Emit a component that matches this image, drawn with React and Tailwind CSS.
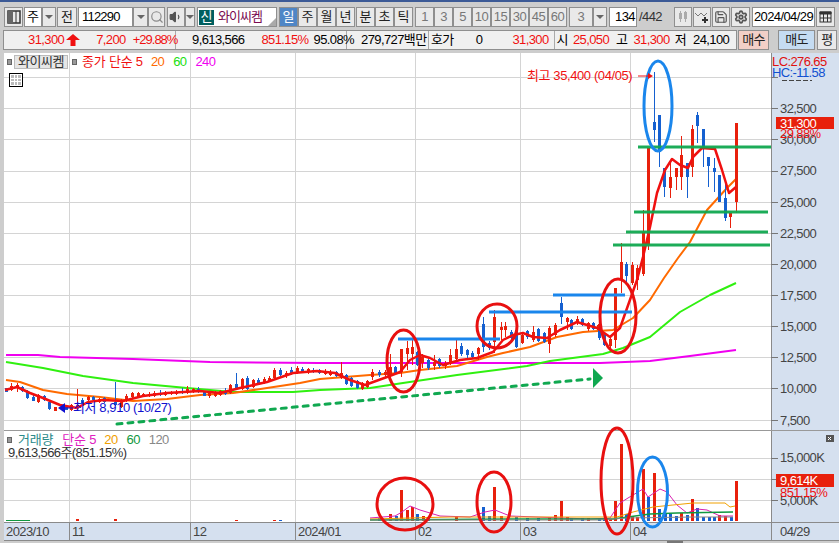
import React from 'react';
import { Search, Settings, Save, Volume1 } from 'lucide-react';

const R = '#e8200c';
const B = '#1560d0';

// x, bodyTop, bodyBottom, wickTop, wickBottom, up
const candles = [
  [6, 388, 392, 388, 392, 0], [11, 386, 390, 383, 391, 1], [17, 385, 388, 383, 392, 1], [22, 387, 391, 386, 392, 0],
  [27, 392, 398, 390, 399, 0], [33, 397, 401, 395, 401, 0], [38, 395, 402, 394, 403, 1], [44, 396, 400, 395, 401, 0],
  [49, 402, 409, 401, 410, 0], [55, 407, 411, 407, 411, 1], [66, 407, 410, 405, 410, 0], [71, 405, 410, 404, 411, 1],
  [77, 405, 408, 389, 410, 1], [82, 400, 404, 398, 405, 0], [88, 397, 400, 396, 404, 1], [93, 397, 400, 396, 401, 0],
  [99, 399, 402, 398, 403, 1], [104, 398, 402, 397, 403, 0], [115, 402, 405, 382, 406, 0], [121, 400, 407, 399, 408, 1],
  [126, 396, 400, 394, 402, 1], [132, 393, 397, 392, 399, 1], [138, 393, 397, 392, 398, 1], [143, 394, 396, 393, 397, 1],
  [149, 394, 396, 392, 397, 1], [154, 393, 396, 391, 397, 1], [160, 393, 395, 390, 396, 0], [165, 393, 395, 391, 396, 1],
  [171, 392, 394, 391, 395, 1], [176, 392, 394, 390, 395, 1], [182, 391, 393, 388, 394, 0], [187, 389, 393, 386, 394, 1],
  [193, 389, 392, 388, 393, 1], [198, 389, 392, 387, 393, 0], [204, 392, 396, 391, 396, 0], [209, 393, 396, 392, 398, 1],
  [215, 392, 396, 391, 397, 1], [220, 391, 395, 390, 396, 1], [225, 391, 394, 388, 395, 0], [230, 385, 393, 384, 394, 1],
  [236, 384, 388, 373, 390, 0], [242, 379, 389, 378, 390, 1], [247, 378, 389, 376, 390, 0], [253, 380, 387, 379, 388, 1],
  [258, 380, 384, 378, 385, 0], [264, 379, 383, 377, 384, 1], [269, 378, 381, 376, 382, 1], [274, 370, 378, 368, 380, 1],
  [280, 370, 375, 368, 376, 0], [286, 373, 376, 371, 378, 1], [291, 370, 374, 367, 375, 0], [297, 368, 372, 366, 374, 1],
  [302, 369, 372, 367, 373, 0], [308, 369, 372, 368, 374, 1], [313, 370, 372, 368, 373, 0], [319, 370, 373, 369, 374, 0],
  [325, 371, 374, 369, 375, 1], [330, 372, 375, 370, 376, 1], [336, 372, 376, 371, 377, 0], [341, 373, 378, 362, 379, 1],
  [346, 375, 384, 374, 385, 0], [351, 378, 386, 377, 387, 0], [357, 381, 388, 380, 389, 0], [362, 383, 389, 382, 390, 1],
  [367, 381, 387, 380, 388, 1], [372, 372, 377, 369, 380, 1], [379, 372, 375, 370, 377, 0], [385, 372, 375, 370, 378, 1],
  [390, 367, 375, 354, 383, 1], [395, 367, 374, 366, 375, 0], [401, 349, 372, 349, 377, 1], [407, 348, 354, 341, 370, 1],
  [412, 347, 354, 338, 365, 1], [417, 352, 365, 351, 366, 0], [422, 357, 363, 354, 368, 1], [428, 360, 368, 358, 370, 0],
  [434, 362, 366, 355, 370, 1], [439, 359, 366, 358, 368, 0], [445, 363, 366, 361, 369, 1], [450, 355, 363, 349, 365, 1],
  [456, 349, 359, 340, 361, 1], [461, 346, 354, 343, 356, 0], [467, 350, 355, 349, 358, 0], [472, 353, 357, 351, 358, 0],
  [478, 348, 354, 347, 360, 1], [483, 324, 347, 317, 352, 0], [489, 343, 348, 341, 350, 0], [494, 317, 342, 310, 353, 1],
  [501, 327, 330, 322, 340, 1], [505, 326, 330, 322, 337, 1], [511, 332, 338, 330, 339, 0], [516, 330, 347, 329, 348, 0],
  [522, 335, 343, 334, 344, 1], [527, 331, 337, 330, 339, 0], [533, 332, 340, 326, 342, 1], [538, 329, 341, 328, 342, 0],
  [544, 333, 342, 332, 343, 0], [549, 328, 344, 326, 353, 1], [555, 325, 335, 323, 337, 1], [561, 303, 317, 297, 324, 0],
  [567, 318, 322, 317, 330, 1], [571, 320, 329, 319, 330, 0], [577, 319, 323, 316, 325, 1], [582, 319, 325, 318, 326, 0],
  [588, 323, 329, 322, 331, 1], [593, 323, 329, 322, 330, 0], [598, 325, 330, 324, 331, 1], [599, 329, 338, 328, 340, 0],
  [604, 335, 345, 334, 346, 0], [610, 339, 346, 337, 350, 1], [615, 288, 340, 288, 348, 1], [621, 262, 280, 243, 293, 1],
  [626, 264, 276, 262, 284, 0], [632, 265, 283, 262, 285, 1], [637, 268, 280, 265, 290, 1], [643, 232, 274, 210, 276, 1],
  [648, 148, 245, 148, 250, 1], [654, 122, 130, 72, 142, 0], [659, 115, 152, 115, 167, 0], [664, 168, 187, 168, 197, 0],
  [670, 177, 188, 160, 198, 1], [676, 168, 177, 168, 190, 1], [681, 155, 177, 136, 190, 1], [687, 163, 177, 163, 198, 0],
  [692, 129, 167, 125, 177, 1], [697, 115, 126, 112, 143, 0], [703, 129, 148, 129, 167, 0], [708, 157, 166, 157, 187, 0],
  [714, 168, 172, 158, 192, 0], [719, 175, 202, 175, 202, 0], [725, 198, 218, 180, 221, 0], [730, 213, 217, 213, 228, 1],
  [736, 123, 202, 123, 213, 1],
];

const ma5 = '5,390 17,387 30,393 43,398 60,405 77,408 88,402 103,400 123,401 143,396 167,393 200,391 220,393 240,388 267,382 293,373 317,371 335,373 350,380 365,385 387,377 400,372 410,360 420,355 430,358 443,365 460,360 477,358 493,352 503,340 513,335 523,333 533,337 547,338 560,330 577,322 597,328 610,337 620,328 637,280 643,257 650,227 657,193 665,170 672,159 680,165 688,168 693,157 702,148 715,149 722,170 729,193 736,187';
const ma20 = '6,380 20,382 43,390 67,394 100,397 133,401 167,399 200,395 233,393 267,388 300,383 320,379 345,377 370,375 400,373 420,370 457,366 487,357 503,353 530,347 557,337 583,332 613,330 633,318 650,300 664,278 678,258 690,242 707,210 727,188 736,179';
const ma60 = '6,362 43,368 83,376 133,383 187,388 233,392 293,392 320,390 370,388 403,383 457,375 527,366 550,361 603,354 623,348 650,337 680,312 710,295 736,283';
const ma240 = '6,355 38,355 60,357 133,359 210,362 320,363 450,363 600,363 650,361 690,356 736,350';

// x, top, up
const volumes = [
  [77, 519, 1], [115, 519, 1], [236, 520, 1], [274, 520, 1], [280, 520, 0], [379, 518, 0], [390, 514, 1], [396, 516, 0], [401, 490, 1], [407, 510, 1],
  [412, 507, 1], [417, 514, 0], [423, 516, 1], [428, 517, 0], [456, 516, 1], [483, 507, 0], [489, 516, 0], [494, 487, 1], [501, 516, 1],
  [516, 517, 0], [527, 518, 0], [538, 518, 0], [549, 517, 1], [555, 515, 1], [561, 501, 1], [567, 517, 1], [571, 518, 0], [582, 518, 0], [588, 518, 1],
  [599, 519, 0], [604, 519, 0], [610, 519, 1], [615, 501, 1], [621, 444, 1], [626, 514, 0], [632, 516, 1], [637, 517, 1], [643, 469, 1],
  [648, 497, 0], [654, 473, 1], [659, 509, 0], [665, 514, 0], [670, 514, 0], [676, 516, 0], [681, 513, 1], [687, 515, 0], [692, 499, 1],
  [697, 508, 0], [703, 517, 0], [709, 517, 0], [714, 517, 0], [719, 515, 1], [725, 516, 1], [731, 517, 0], [736, 481, 1],
];

const Btn = ({ w, children, className = '' }) => (
  <div className={`h-5 shrink-0 flex items-center justify-center border border-[#8f8f8f] bg-[#e9e9e9] text-[13px] text-[#222] ${className}`} style={{ width: w }}>
    {children}
  </div>
);

const Input = ({ w, children, className = '' }) => (
  <div className={`h-5 shrink-0 flex items-center border border-[#8f8f8f] bg-white text-[13px] text-black ${className}`} style={{ width: w }}>
    {children}
  </div>
);

const Drop = ({ w = 14 }) => (
  <div className="h-5 shrink-0 flex items-center justify-center border border-[#8f8f8f] bg-[#e9e9e9]" style={{ width: w }}>
    <div className="w-0 h-0 border-x-[4px] border-x-transparent border-t-[4px] border-t-[#666]" />
  </div>
);

const Toolbar = () => (
  <div className="h-[27px] flex items-center pl-1 pt-[3px]">
    <Btn w={19} className="mr-[1px]">
      <svg width="14" height="14" viewBox="0 0 14 14">
        <rect x="1" y="1" width="12" height="12" fill="none" stroke="#333" strokeWidth="1.5" />
        <rect x="1" y="1" width="5" height="12" fill="#666" />
        <path d="M9 1v12" stroke="#333" />
      </svg>
    </Btn>
    <Input w={18} className="justify-center">주</Input>
    <Drop />
    <Btn w={20} className="mx-[1px]">전</Btn>
    <Input w={55} className="pl-[3px] tracking-[-0.8px]">112290</Input>
    <Drop w={15} />
    <Btn w={17}><Search size={14} strokeWidth={2} color="#8a8a8a" /></Btn>
    <Btn w={18} className="ml-[2px]"><Volume1 size={14} color="#555" fill="#555" /></Btn>
    <Drop w={10} />
    <Input w={80} className="ml-[2px] relative">
      <span className="w-[15px] h-[15px] ml-[1px] bg-[#005f5f] text-white flex items-center justify-center text-[13px]">신</span>
      <span className="ml-1 text-[#7a0a50] text-[13px] tracking-[-1px]">와이씨켐</span>
      <div className="absolute right-0 bottom-0 w-0 h-0 border-l-[8px] border-l-transparent border-b-[8px] border-b-[#aaa]" />
    </Input>
    <Btn w={19} className="ml-[2px] !bg-[#4f86c6] !text-white">일</Btn>
    <Btn w={19}>주</Btn>
    <Btn w={19}>월</Btn>
    <Btn w={19}>년</Btn>
    <Btn w={19} className="ml-[1px]">분</Btn>
    <Btn w={19}>초</Btn>
    <Btn w={19}>틱</Btn>
    {['1', '3', '5', '10', '15', '30', '45', '60'].map((t, i) => (
      <Btn key={t} w={19} className={`!text-[#777] tracking-[-0.6px] ${i === 0 ? 'ml-[2px]' : ''}`}>{t}</Btn>
    ))}
    <Btn w={24} className="ml-[2px] !text-[#777]">3</Btn>
    <Drop />
    <Input w={28} className="ml-[2px] justify-end pr-[1px] tracking-[-0.6px]">134</Input>
    <span className="w-[35px] ml-[2px] shrink-0 text-[13px] text-[#333] tracking-[-0.6px]">/442</span>
    <Btn w={18}>
      <svg width="14" height="14" viewBox="0 0 14 14">
        <path d="M3 3h3v6H3zM8 2h3v7H8z" fill="#aaa" />
        <path d="M4.500 1v11M9.500 1v11" stroke="#aaa" />
      </svg>
    </Btn>
    <Btn w={18} className="ml-[1px]">
      <svg width="16" height="14" viewBox="0 0 16 14" fill="none">
        <path d="M1 3l3 3 3-3 3 3 3-3" stroke="#777" />
        <path d="M11 7v6M8 10h6" stroke="#333" strokeWidth="2" />
      </svg>
    </Btn>
    <Btn w={18} className="ml-[1px]"><Save size={14} color="#555" /></Btn>
    <Btn w={19} className="ml-[1px]"><Settings size={14} color="#555" strokeWidth={3} /></Btn>
    <Input w={63} className="ml-[2px] justify-center tracking-[-0.6px]">2024/04/29</Input>
    <Btn w={19} className="ml-[1px]">
      <svg width="13" height="12" viewBox="0 0 13 12" fill="none" stroke="#333">
        <rect x="1" y="1" width="11" height="10" />
        <path d="M1 1h11v2H1z" fill="#333" />
        <path d="M1 7h11M4.500 3v8M8.500 3v8" />
      </svg>
    </Btn>
  </div>
);

const Quote = () => (
  <div className="h-[24px] flex items-start pl-[3px] pt-[1px] text-[13px] leading-[18px] whitespace-nowrap tracking-[-0.6px]">
    <div className="h-5 w-[734px] shrink-0 flex border border-[#8f8f8f] bg-[#f0f0f0]">
      <div className="w-[172px] shrink-0 flex items-center border-r border-[#aaa] text-[#f01010]">
        <span className="ml-[24px] shrink-0">31,300</span>
        <svg width="14" height="12" viewBox="0 0 14 12" className="ml-[2px] shrink-0"><path d="M7 0l7 6H9.500v6h-5V6H0z" fill="#f01010" /></svg>
        <span className="ml-[16px] shrink-0">7,200</span>
        <span className="ml-[7px] shrink-0 tracking-[-1px]">+29.88%</span>
      </div>
      <div className="w-[171px] shrink-0 flex items-center border-r border-[#aaa]">
        <span className="ml-[16px] text-black">9,613,566</span>
        <span className="ml-[17px] text-[#f01010]">851.15%</span>
        <span className="ml-[5px] text-black">95.08%</span>
      </div>
      <div className="w-[82px] shrink-0 flex items-center border-r border-[#aaa] text-black overflow-hidden">
        <span className="ml-[14px]">279,727백만</span>
      </div>
      <div className="flex-1 flex items-center text-black">
        <span className="ml-[2px]">호가</span>
        <span className="ml-[22px]">0</span>
        <span className="ml-[30px] text-[#f01010]">31,300</span>
        <span className="ml-[5px] pl-[2px] border-l border-[#aaa]">시</span>
        <span className="ml-[5px] text-[#f01010]">25,050</span>
        <span className="ml-[7px]">고</span>
        <span className="ml-[6px] text-[#f01010]">31,300</span>
        <span className="ml-[5px]">저</span>
        <span className="ml-[7px]">24,100</span>
      </div>
    </div>
    <Btn w={31} className="ml-[1px] !bg-[#f2cfc7]">매수</Btn>
    <Btn w={37} className="ml-[9px] !bg-[#c5dcf2]">매도</Btn>
    <Btn w={20} className="ml-[2px]">평</Btn>
  </div>
);

const Grid = ({ ys, top, bottom }) => (
  <g stroke="#d4d4d4">
    {ys.map((y) => <line key={y} x1="4" x2="771" y1={y + 0.5} y2={y + 0.5} />)}
    {[69, 190, 295, 415, 520, 630].map((x) => <line key={x} x1={x + 0.5} x2={x + 0.5} y1={top} y2={bottom} />)}
  </g>
);

const MainChart = () => (
  <svg width="767" height="378" viewBox="4 53 767 378" className="block shrink-0 bg-white overflow-visible">
    <Grid ys={[77, 108, 139, 171, 202, 233, 264, 295, 326, 357, 388, 420]} top={53} bottom={430} />
    <line x1="4" x2="771" y1="430.500" y2="430.500" stroke="#999" />
    <g fill="none" strokeLinejoin="round" strokeWidth="2">
      <polyline points={ma240} stroke="#f000f0" />
      <polyline points={ma60} stroke="#30f010" />
      <polyline points={ma20} stroke="#ff6a00" />
    </g>
    {candles.map(([x, t, b, wt, wb, up]) => (
      <g key={x} fill={up ? R : B} stroke="none">
        <rect x={x} y={wt} width="1" height={wb - wt} />
        <rect x={x - 1} y={t} width="3" height={Math.max(b - t, 1)} />
      </g>
    ))}
    <polyline points={ma5} fill="none" stroke="#f01010" strokeWidth="2.500" strokeLinejoin="round" />
    <g stroke="#10a850" strokeWidth="3" opacity="0.95">
      <line x1="638" x2="771" y1="147" y2="147" />
      <line x1="634" x2="768" y1="212" y2="212" />
      <line x1="626" x2="768" y1="232" y2="232" />
      <line x1="613" x2="770" y1="245" y2="245" />
    </g>
    <g stroke="#1a86ec" strokeWidth="3">
      <line x1="553" x2="625" y1="295" y2="295" />
      <line x1="489" x2="632" y1="312" y2="312" />
      <line x1="398" x2="500" y1="339" y2="339" />
    </g>
    <line x1="117" y1="424" x2="590" y2="379" stroke="#10a850" strokeWidth="3" strokeLinecap="round" strokeDasharray="5 6" />
    <path d="M593 368l10 10-10 10z" fill="#10a850" />
    <g fill="none" strokeWidth="3">
      <ellipse cx="403.500" cy="361" rx="16.500" ry="31" stroke="#e81010" />
      <ellipse cx="497" cy="326" rx="20" ry="22" stroke="#e81010" />
      <ellipse cx="618" cy="316" rx="18" ry="37" stroke="#e81010" />
      <ellipse cx="658" cy="106" rx="14" ry="45" stroke="#1a86ec" />
    </g>
    <text x="527" y="80" fontSize="13" fill="#f01010" className="tracking-[-0.4px]">최고 35,400 (04/05)</text>
    <path d="M638 76h10" stroke="#f01010" />
    <path d="M648 73l5 3-5 3z" fill="#f01010" />
    <text x="73" y="412" fontSize="13" fill="#1010d0" className="tracking-[-0.4px]">최저 8,910 (10/27)</text>
    <path d="M58 408l7-5v10z" fill="#1010d0" />
    <path d="M65 408h8" stroke="#1010d0" />
  </svg>
);

const MainAxis = () => (
  <svg width="68" height="378" viewBox="771 53 68 378" className="block shrink-0 bg-[#d5e0ef]">
    <line x1="771.500" x2="771.500" y1="53" y2="431" stroke="#8a8a8a" />
    <line x1="771" x2="839" y1="430.500" y2="430.500" stroke="#999" />
    {[77, 108, 139, 171, 202, 233, 264, 295, 326, 357, 388, 420].map((y) => (
      <line key={y} x1="771" x2="778" y1={y + 0.5} y2={y + 0.5} stroke="#777" />
    ))}
    <g fill="#444" fontSize="13" className="tracking-[-0.6px]">
      {[['32,500', 108], ['27,500', 170], ['25,000', 202], ['22,500', 233], ['20,000', 264], ['17,500', 295], ['15,000', 326], ['12,500', 357], ['10,000', 388], ['7,500', 420]].map(([t, y]) => (
        <text key={t} x="780" y={y + 5}>{t}</text>
      ))}
      <text x="780" y="144">30,000</text>
    </g>
    <line x1="782" x2="812" y1="80.500" y2="80.500" stroke="#444" strokeDasharray="5 2" />
    <g fontSize="13" className="tracking-[-0.6px]">
      <text x="772" y="66" fill="#e01010">LC:276.65</text>
      <text x="772" y="77" fill="#1050d0">HC:-11.58</text>
      <rect x="776" y="117" width="58" height="12" fill={R} />
      <text x="780" y="128" fill="#fff">31,300</text>
      <text x="780" y="138" fill="#f01010">29.88%</text>
    </g>
  </svg>
);

const VolumeChart = () => (
  <svg width="767" height="91" viewBox="4 431 767 91" className="block shrink-0 bg-white overflow-visible">
    <Grid ys={[458, 479, 500]} top={431} bottom={522} />
    <rect x="6" y="520" width="24" height="1" fill="#109840" />
    {volumes.map(([x, t, up]) => (
      <rect key={x} x={x - 1} y={t} width="3" height={521 - t} fill={up ? R : B} />
    ))}
    <g fill="none" strokeWidth="1">
      <polyline points="370,518 395,516 402,512 410,506 420,510 440,516 470,517 485,512 495,510 510,516 590,519 610,518 620,503 628,498 643,489 648,497 660,489 667,492 677,505 687,513 697,509 707,510 720,516 733,516" stroke="#d820b0" />
      <polyline points="370,519 450,517 520,517 593,517 617,517 633,512 653,507 693,503 725,503 730,507 735,506" stroke="#f0a000" />
      <polyline points="370,520 520,519 560,519 613,519 650,514 677,513 733,512" stroke="#109840" strokeWidth="1.500" />
      <polyline points="370,520 600,520 627,518 693,517 733,517" stroke="#888" />
    </g>
    <g fill="none" strokeWidth="3">
      <ellipse cx="405" cy="504" rx="28" ry="26" stroke="#e81010" />
      <ellipse cx="494" cy="502" rx="17" ry="30" stroke="#e81010" />
      <ellipse cx="617" cy="481" rx="16" ry="53" stroke="#e81010" />
      <ellipse cx="652.500" cy="492" rx="15" ry="35" stroke="#1a86ec" />
    </g>
  </svg>
);

const VolumeAxis = () => (
  <svg width="68" height="91" viewBox="771 431 68 91" className="block shrink-0 bg-[#d5e0ef]">
    <line x1="771.500" x2="771.500" y1="431" y2="522" stroke="#8a8a8a" />
    {[458, 479, 500].map((y) => <line key={y} x1="771" x2="778" y1={y + 0.5} y2={y + 0.5} stroke="#777" />)}
    <g fontSize="13" className="tracking-[-0.6px]">
      <text x="780" y="462" fill="#444">15,000K</text>
      <text x="780" y="484" fill="#444">10,000K</text>
      <text x="780" y="505" fill="#444">5,000K</text>
      <rect x="776" y="474" width="58" height="13" fill={R} />
      <text x="780" y="485" fill="#fff">9,614K</text>
      <text x="780" y="497" fill="#f01010">851.15%</text>
    </g>
    <rect x="826" y="435" width="8" height="7" fill="#555" />
    <path d="M828 437l3 3M831 437l-3 3" stroke="#fff" />
  </svg>
);

const DateAxis = () => (
  <div className="h-[19px] ml-1 flex border-y border-[#8a8a8a] bg-[#d5e0ef] text-[13px] leading-[17px] text-[#444] tracking-[-0.6px]">
    {[['2023/10', 65], ['11', 121], ['12', 105], ['2024/01', 120], ['02', 105], ['03', 110], ['04', 141]].map(([t, w], i) => (
      <span key={t} className={`shrink-0 pl-[2px] ${i > 0 ? 'border-l border-[#8a8a8a]' : ''}`} style={{ width: w }}>{t}</span>
    ))}
    <span className="flex-1 pl-[8px] border-l border-[#8a8a8a]">04/29</span>
  </div>
);

export default function App() {
  return (
    <div className="w-[839px] h-[543px] overflow-hidden flex flex-col bg-[#cdcdcd] font-['Liberation_Sans','Noto_Sans_CJK_KR',sans-serif]">
      <div className="h-[2px] bg-[#3c5a96]" />
      <Toolbar />
      <Quote />
      <div className="relative flex pl-1">
        <MainChart />
        <MainAxis />
        <div className="absolute left-[7px] top-[2px] flex items-center h-[14px] text-[13px] whitespace-nowrap">
          <span className="w-[5px] h-[6px] mr-[2px] bg-[#999] border border-[#666]" />
          <span className="w-[54px] h-[14px] text-center bg-[#e6e6e6] border border-[#bbb] text-[#333] leading-[12px] tracking-[-0.5px]">와이씨켐</span>
          <span className="w-[5px] h-[6px] ml-[4px] mr-[5px] bg-[#999] border border-[#666]" />
          <span className="text-[#f01010] tracking-[-0.2px]">종가 단순 5</span>
          <span className="ml-[8px] text-[#ff6a00] tracking-[-0.6px]">20</span>
          <span className="ml-[9px] text-[#20e010] tracking-[-0.6px]">60</span>
          <span className="ml-[9px] text-[#f000f0] tracking-[-0.6px]">240</span>
        </div>
        <div className="absolute left-[9px] top-[20px] w-[14px] h-[14px] border border-black grid grid-cols-3 gap-[1px] p-[1px] bg-white">
          {[0, 1, 2, 3, 4, 5, 6, 7, 8].map((n) => <span key={n} className="bg-[#bbb]" />)}
        </div>
      </div>
      <div className="relative z-10 flex pl-1">
        <VolumeChart />
        <VolumeAxis />
        <div className="absolute left-[7px] top-[2px] text-[13px] leading-[13px] whitespace-nowrap">
          <div className="flex items-center">
            <span className="w-[5px] h-[6px] mr-[6px] bg-[#999] border border-[#666]" />
            <span className="text-[#2a8a8a] tracking-[-0.2px]">거래량</span>
            <span className="ml-[9px] text-[#e020c0] tracking-[-0.2px]">단순 5</span>
            <span className="ml-[8px] text-[#f0a000] tracking-[-0.6px]">20</span>
            <span className="ml-[9px] text-[#109840] tracking-[-0.6px]">60</span>
            <span className="ml-[9px] text-[#888] tracking-[-0.6px]">120</span>
          </div>
          <div className="ml-[1px] text-[#333] tracking-[-0.6px]">9,613,566주(851.15%)</div>
        </div>
      </div>
      <DateAxis />
      <div className="ml-[667px] w-4 h-[2px] bg-[#777]" />
    </div>
  );
}
